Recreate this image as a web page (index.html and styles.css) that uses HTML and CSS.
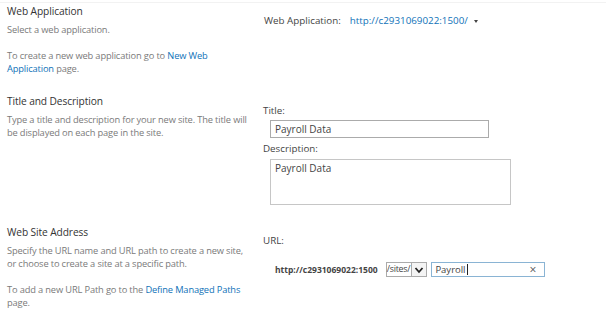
FILE: index.html
```html
<!DOCTYPE html>
<html>
<head>
<meta charset="utf-8">
<link rel="stylesheet" href="styles.css">
</head>
<body>
<div class="page">
  <div class="section s1">
    <div class="desc-col">
      <div class="heading">Web Application</div>
      <p class="text">Select a web application.</p>
      <p class="text para">To create a new web application go to <a class="link">New Web Application</a> page.</p>
    </div>
    <div class="field-col">
      <div class="webapp">
        <span class="label">Web Application:</span>
        <span class="link url">http://c2931069022:1500/</span>
        <span class="caret"></span>
      </div>
    </div>
  </div>

  <div class="section s2">
    <div class="desc-col">
      <div class="heading">Title and Description</div>
      <p class="text">Type a title and description for your new site. The title will be displayed on each page in the site.</p>
    </div>
    <div class="field-col">
      <div class="label">Title:</div>
      <div class="input title-input">Payroll Data</div>
      <div class="label desc-label">Description:</div>
      <div class="input textarea">Payroll Data</div>
    </div>
  </div>

  <div class="section s3">
    <div class="desc-col">
      <div class="heading">Web Site Address</div>
      <p class="text">Specify the URL name and URL path to create a new site, or choose to create a site at a specific path.</p>
      <p class="text para">To add a new URL Path go to the <a class="link">Define Managed Paths</a> page.</p>
    </div>
    <div class="field-col">
      <div class="label">URL:</div>
      <div class="url-row">
        <span class="host">http://c2931069022:1500</span>
        <span class="select"><span class="sel-text">/sites/</span><span class="sel-btn"><svg width="10" height="8" viewBox="0 0 10 8"><path d="M1.5 2 L5 6 L8.5 2" fill="none" stroke="#222" stroke-width="1.8"/></svg></span></span>
        <span class="input url-input"><span class="val">Payroll</span><span class="cursor"></span><span class="clear">×</span></span>
      </div>
    </div>
  </div>
</div>
</body>
</html>
```

FILE: styles.css
```css
html, body {
  margin: 0;
  padding: 0;
  background: #fff;
}
body {
  font-family: "Open Sans", "Noto Sans", sans-serif;
  color: #444;
  width: 606px;
  height: 313px;
  overflow: hidden;
}
.page {
  border-top: 1px solid #f2f2f2;
  margin-top: 2px;
}
.section {
  display: grid;
  grid-template-columns: 256px 1fr;
}
.desc-col {
  padding-left: 7px;
}
.heading {
  font-size: 10.2px;
  line-height: 15px;
  color: #333;
  letter-spacing: -0.1px;
}
.text {
  margin: 4px 0 0 0;
  font-size: 9.3px;
  line-height: 13px;
  color: #7a7a7a;
  width: 246px;
  letter-spacing: -0.15px;
}
.text.para {
  margin-top: 13px;
}
.link {
  color: #0f72b8;
  text-decoration: none;
}
.s1 {
  padding-top: 1px;
  height: 90px;
}
.s2 {
  height: 131px;
}
.field-col {
  padding-left: 7px;
}
.label {
  font-size: 9.8px;
  line-height: 14px;
  color: #444;
}
.webapp {
  margin-top: 10px;
  margin-left: 1px;
  display: flex;
  align-items: center;
}
.webapp .label {
  margin-right: 9px;
}
.url {
  font-size: 9.8px;
  line-height: 14px;
}
.caret {
  display: inline-block;
  width: 0;
  height: 0;
  border-left: 2.5px solid transparent;
  border-right: 2.5px solid transparent;
  border-top: 3px solid #444;
  margin-left: 6px;
  margin-top: 1px;
}
.s2 .field-col {
  padding-top: 10px;
}
.input {
  box-sizing: border-box;
  border: 1px solid #ababab;
  background: #fff;
  font-size: 10px;
  color: #444;
  margin-left: 7px;
}
.title-input {
  width: 219px;
  height: 18px;
  line-height: 16px;
  padding-left: 4px;
  margin-top: 2px;
}
.desc-label {
  margin-top: 4px;
}
.textarea {
  width: 241px;
  height: 46px;
  padding: 1px 4px;
  line-height: 15px;
  margin-top: 3px;
  border-color: #c6c6c6;
}
.s3 .field-col {
  padding-top: 9px;
}
.url-row {
  display: flex;
  align-items: center;
  margin-top: 14px;
  margin-left: 12px;
}
.host {
  font-weight: bold;
  font-size: 8.5px;
  color: #444;
  margin-right: 8px;
}
.select {
  display: flex;
  box-sizing: border-box;
  height: 15px;
  border: 1px solid #ababab;
  align-items: stretch;
}
.sel-text {
  font-size: 8.8px;
  line-height: 13px;
  padding: 0 1px 0 0;
  color: #444;
  letter-spacing: -0.2px;
}
.sel-btn {
  width: 14px;
  border-left: 1px solid #ababab;
  display: flex;
  align-items: center;
  justify-content: center;
  background: #f4f4f4;
}
.url-input {
  display: flex;
  align-items: center;
  width: 114px;
  height: 15px;
  margin-left: 4px;
  padding-left: 3px;
  border-color: #8ab4d4;
  font-size: 9.5px;
}
.cursor {
  width: 1px;
  height: 11px;
  background: #222;
  margin-left: 1px;
}
.clear {
  margin-left: auto;
  margin-right: 8px;
  font-size: 12px;
  color: #555;
  line-height: 12px;
}
```
